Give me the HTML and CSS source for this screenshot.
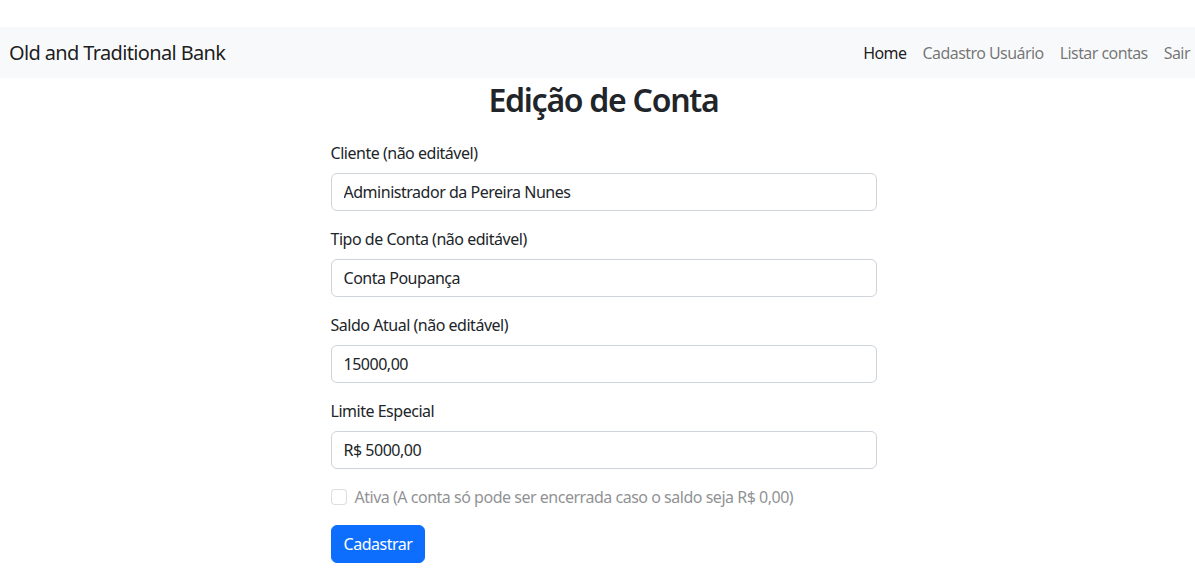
FILE: index.html
```html
<!DOCTYPE html>
<html lang="pt-BR">
<head>
<meta charset="utf-8">
<title>Edição de Conta</title>
<link rel="stylesheet" href="styles.css">
</head>
<body>
<nav class="navbar">
  <a class="brand" href="#">Old and Traditional Bank</a>
  <ul class="nav">
    <li><a class="nav-link active" href="#">Home</a></li>
    <li><a class="nav-link" href="#">Cadastro Usuário</a></li>
    <li><a class="nav-link" href="#">Listar contas</a></li>
    <li><a class="nav-link" href="#">Sair</a></li>
  </ul>
</nav>
<main class="container">
  <div class="col">
    <h2 class="title">Edição de Conta</h2>
    <form class="form">
      <div class="group">
        <label class="label">Cliente (não editável)</label>
        <input class="input" type="text" value="Administrador da Pereira Nunes" readonly>
      </div>
      <div class="group">
        <label class="label">Tipo de Conta (não editável)</label>
        <input class="input" type="text" value="Conta Poupança" readonly>
      </div>
      <div class="group">
        <label class="label">Saldo Atual (não editável)</label>
        <input class="input" type="text" value="15000,00" readonly>
      </div>
      <div class="group">
        <label class="label">Limite Especial</label>
        <input class="input" type="text" value="R$ 5000,00">
      </div>
      <div class="check">
        <span class="check-box"></span>
        <span class="check-label">Ativa (A conta só pode ser encerrada caso o saldo seja R$ 0,00)</span>
      </div>
      <button class="btn" type="button">Cadastrar</button>
    </form>
  </div>
</main>
</body>
</html>
```

FILE: styles.css
```css
* { box-sizing: border-box; }
html, body { margin: 0; }
body {
  padding-top: 27px;
  font-family: "Noto Sans", "Open Sans", sans-serif;
  font-size: 16px;
  line-height: 1.5;
  letter-spacing: -0.03em;
  color: #212529;
  background: #fff;
}
.navbar {
  display: flex;
  justify-content: space-between;
  align-items: center;
  height: 51px;
  background: #f8f9fa;
  padding: 0 0 0 9px;
}
.brand {
  font-size: 20px;
  letter-spacing: -0.032em;
  color: rgba(0,0,0,.9);
  text-decoration: none;
  line-height: 30px;
}
.nav {
  display: flex;
  list-style: none;
  margin: 0 -3px 0 0;
  padding: 0;
}
.nav-link {
  display: block;
  padding: 8px;
  letter-spacing: -0.035em;
  color: rgba(0,0,0,.55);
  text-decoration: none;
}
.nav-link.active { color: rgba(0,0,0,.9); }
.container {
  display: flex;
  justify-content: center;
  padding-left: 12px;
}
.col { width: 546px; }
.title {
  margin: 3px 0 8px;
  font-size: 32px;
  font-weight: 600;
  letter-spacing: -0.04em;
  line-height: 1.2;
  text-align: center;
}
.form { margin-top: 22px; }
.group { margin-bottom: 16px; }
.label {
  display: block;
  margin-bottom: 8px;
}
.input {
  display: block;
  width: 100%;
  height: 38px;
  padding: 6px 12px;
  font: inherit;
  letter-spacing: inherit;
  color: #212529;
  background: #fff;
  border: 1px solid #ced4da;
  border-radius: 6px;
}
.check {
  display: flex;
  align-items: flex-start;
  margin-bottom: 16px;
  opacity: .5;
}
.check-box {
  flex: none;
  width: 16px;
  height: 16px;
  margin: 4px 8px 0 0;
  border: 1px solid rgba(0,0,0,.25);
  border-radius: 4px;
  background: #fff;
}
.btn {
  display: block;
  padding: 6px 12px;
  font: inherit;
  letter-spacing: inherit;
  color: #fff;
  background: #0d6efd;
  border: 1px solid #0d6efd;
  border-radius: 6px;
}
```
